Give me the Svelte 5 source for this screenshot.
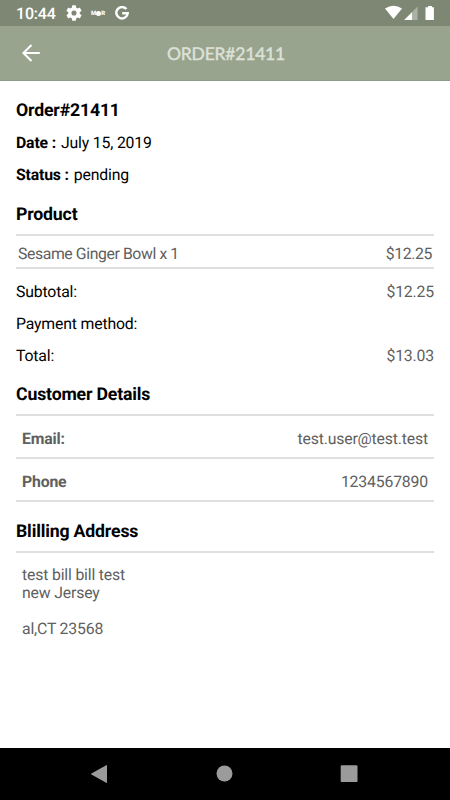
<script lang="ts">
	interface Row {
		label: string;
		value?: string;
	}

	const order = {
		number: '21411',
		date: 'July 15, 2019',
		status: 'pending'
	};

	const products: Row[] = [{ label: 'Sesame Ginger Bowl x 1', value: '$12.25' }];

	const totals: Row[] = [
		{ label: 'Subtotal:', value: '$12.25' },
		{ label: 'Payment method:' },
		{ label: 'Total:', value: '$13.03' }
	];

	const customer: Row[] = [
		{ label: 'Email:', value: 'test.user@test.test' },
		{ label: 'Phone', value: '1234567890' }
	];

	const address = ['test bill bill test', 'new Jersey', '', 'al,CT 23568'];
</script>

<div class="screen">
	<div class="status">
		<span class="status__time">10:44</span>
		<svg class="status__gear" width="16" height="16" viewBox="2 2 20 20" aria-hidden="true">
			<path
				fill="#fff"
				d="M19.14 12.94c.04-.3.06-.61.06-.94s-.02-.64-.07-.94l2.03-1.58a.49.49 0 0 0 .12-.61l-1.92-3.32a.49.49 0 0 0-.59-.22l-2.39.96c-.5-.38-1.03-.7-1.62-.94l-.36-2.54a.48.48 0 0 0-.48-.41h-3.84a.47.47 0 0 0-.47.41l-.36 2.54c-.59.24-1.13.57-1.62.94l-2.39-.96a.48.48 0 0 0-.59.22L2.74 8.87a.47.47 0 0 0 .12.61l2.03 1.58c-.05.3-.09.63-.09.94s.02.64.07.94l-2.03 1.58a.49.49 0 0 0-.12.61l1.92 3.32c.12.22.37.29.59.22l2.39-.96c.5.38 1.03.7 1.62.94l.36 2.54c.05.24.24.41.48.41h3.84c.24 0 .44-.17.47-.41l.36-2.54c.59-.24 1.13-.56 1.62-.94l2.39.96c.22.08.47 0 .59-.22l1.92-3.32a.47.47 0 0 0-.12-.61zM12 15.2a3.2 3.2 0 1 1 0-6.4 3.2 3.2 0 0 1 0 6.4z"
			/>
		</svg>
		<span class="status__brand">M<i></i>R</span>
		<svg class="status__google" width="14" height="14" viewBox="0 0 14 14" aria-hidden="true">
			<path d="M11.4 3.1A5.7 5.7 0 1 0 12.7 7.3H7.2" fill="none" stroke="#fff" stroke-width="2.4" />
		</svg>
		<svg class="status__signal" width="52" height="16" viewBox="0 0 52 16" aria-hidden="true">
			<path fill="#fff" d="M1 3.4Q9.5-1.9 18 3.4L9.5 14z" />
			<path fill="#fff" fill-opacity=".35" d="M33.6 1.6V15H20.2z" />
			<path fill="#fff" d="M28 7.2V15h-7.8z" />
			<path fill="#fff" d="M44 .9h4v1.3h1.9V15h-8.4V2.2H44z" />
		</svg>
	</div>

	<header class="bar">
		<button class="bar__back" type="button" aria-label="Back">
			<svg width="18" height="18" viewBox="0 0 18 18">
				<path d="M17.8 9H1.4M9.5 1L1.4 9l8.1 8" fill="none" stroke="#fff" stroke-width="2.1" />
			</svg>
		</button>
		<h1 class="bar__title">ORDER#{order.number}</h1>
	</header>

	<main class="content">
		<h2 class="heading heading--first">Order#{order.number}</h2>
		<p class="meta"><b>Date :</b><span>{order.date}</span></p>
		<p class="meta"><b>Status :</b><span>{order.status}</span></p>

		<h2 class="heading">Product</h2>
		<div class="products">
			{#each products as product}
				<div class="row row--product">
					<span>{product.label}</span>
					<span>{product.value}</span>
				</div>
			{/each}
		</div>

		<div class="totals">
			{#each totals as total}
				<div class="row row--total">
					<span class="dark">{total.label}</span>
					<span>{total.value ?? ''}</span>
				</div>
			{/each}
		</div>

		<h2 class="heading">Customer Details</h2>
		<div class="customer">
			{#each customer as entry}
				<div class="row row--customer">
					<b>{entry.label}</b>
					<span>{entry.value}</span>
				</div>
			{/each}
		</div>

		<h2 class="heading heading--billing">Blilling Address</h2>
		<address class="address">
			{#each address as line}
				<div>{line}</div>
			{/each}
		</address>
	</main>

	<nav class="nav">
		<svg width="18" height="20" viewBox="0 0 18 20" aria-label="Back">
			<path fill="#9b9b9b" d="M17 1.6v16.8q0 .8-.8.4L1.4 10.5q-.7-.5 0-1L16.2 1.2q.8-.4.8.4z" />
		</svg>
		<svg width="18" height="20" viewBox="0 0 18 20" aria-label="Home">
			<circle cx="9.5" cy="9.5" r="8" fill="#9b9b9b" />
		</svg>
		<svg width="18" height="20" viewBox="0 0 18 20" aria-label="Recent apps">
			<rect x=".7" y="1.3" width="16.8" height="16.8" rx="1.2" fill="#9b9b9b" />
		</svg>
	</nav>
</div>

<style>
	:global(body) {
		margin: 0;
	}

	.screen {
		display: flex;
		flex-direction: column;
		width: 450px;
		height: 800px;
		overflow: hidden;
		background: #fff;
		color: #606060;
		font-family: Roboto, sans-serif;
		font-size: 15.8px;
		letter-spacing: -0.17px;
		text-rendering: geometricPrecision;
	}

	.status {
		display: flex;
		align-items: center;
		box-sizing: border-box;
		height: 26px;
		padding: 0 15px;
		background: #7e8773;
		color: #fff;
	}

	.status__time {
		width: 51px;
		font-size: 16px;
		font-weight: 500;
		letter-spacing: -0.2px;
		padding: 1px 0 0 1px;
		box-sizing: border-box;
	}

	.status__brand {
		display: flex;
		align-items: center;
		width: 15px;
		margin-left: 9px;
		font-size: 6px;
		font-weight: 900;
		letter-spacing: 0;
	}

	.status__brand i {
		width: 5px;
		height: 5px;
		border-radius: 50%;
		background: #fff;
	}

	.status__google {
		margin-left: 9px;
	}

	.status__signal {
		margin-left: auto;
		margin-right: -1px;
	}

	.bar {
		display: flex;
		align-items: center;
		box-sizing: border-box;
		height: 55px;
		border-bottom: 1px solid #8f9a86;
		background: #98a48e;
	}

	.bar__back {
		display: flex;
		width: 18px;
		margin-left: 22px;
		padding: 0;
		border: none;
		background: none;
	}

	.bar__title {
		flex: 1;
		margin: 0 38px 0 0;
		color: #dde2d9;
		font-family: Lato, sans-serif;
		font-size: 17.5px;
		font-weight: 400;
		letter-spacing: -0.2px;
		text-align: center;
		-webkit-text-stroke: 0.4px #dde2d9;
	}

	.content {
		flex: 1;
		padding: 13px 16px 0;
	}

	.heading {
		margin: 0;
		color: #000;
		font-size: 17.7px;
		font-weight: 700;
		line-height: 34px;
		height: 43px;
		box-sizing: border-box;
		padding-top: 7px;
	}

	.heading--first {
		height: 33px;
		padding-top: 0;
	}

	.heading--billing {
		height: 49px;
		padding-top: 13px;
	}

	.meta {
		display: flex;
		gap: 5px;
		margin: 0;
		color: #000;
		line-height: 32px;
	}

	b {
		font-weight: 700;
	}

	.row {
		display: flex;
		justify-content: space-between;
		align-items: center;
		box-sizing: border-box;
	}

	.products {
		border-top: 2px solid #e0e0e0;
	}

	.row--product {
		height: 33px;
		padding: 3px 2px 0;
		border-bottom: 2px solid #e0e0e0;
		letter-spacing: -0.4px;
	}

	.totals {
		padding-top: 6px;
	}

	.row--total {
		height: 32px;
	}

	.dark {
		color: #000;
	}

	.customer {
		border-top: 2px solid #e0e0e0;
	}

	.row--customer {
		height: 43px;
		padding: 3px 6px 0;
		border-bottom: 2px solid #e0e0e0;
	}

	.address {
		padding: 13px 6px 0;
		border-top: 2px solid #e0e0e0;
		font-style: normal;
		line-height: 18px;
	}

	.address div {
		height: 18px;
	}

	.nav {
		display: flex;
		justify-content: space-between;
		align-items: center;
		box-sizing: border-box;
		height: 52px;
		padding: 0 92px 0 90px;
		background: #000;
	}
</style>
